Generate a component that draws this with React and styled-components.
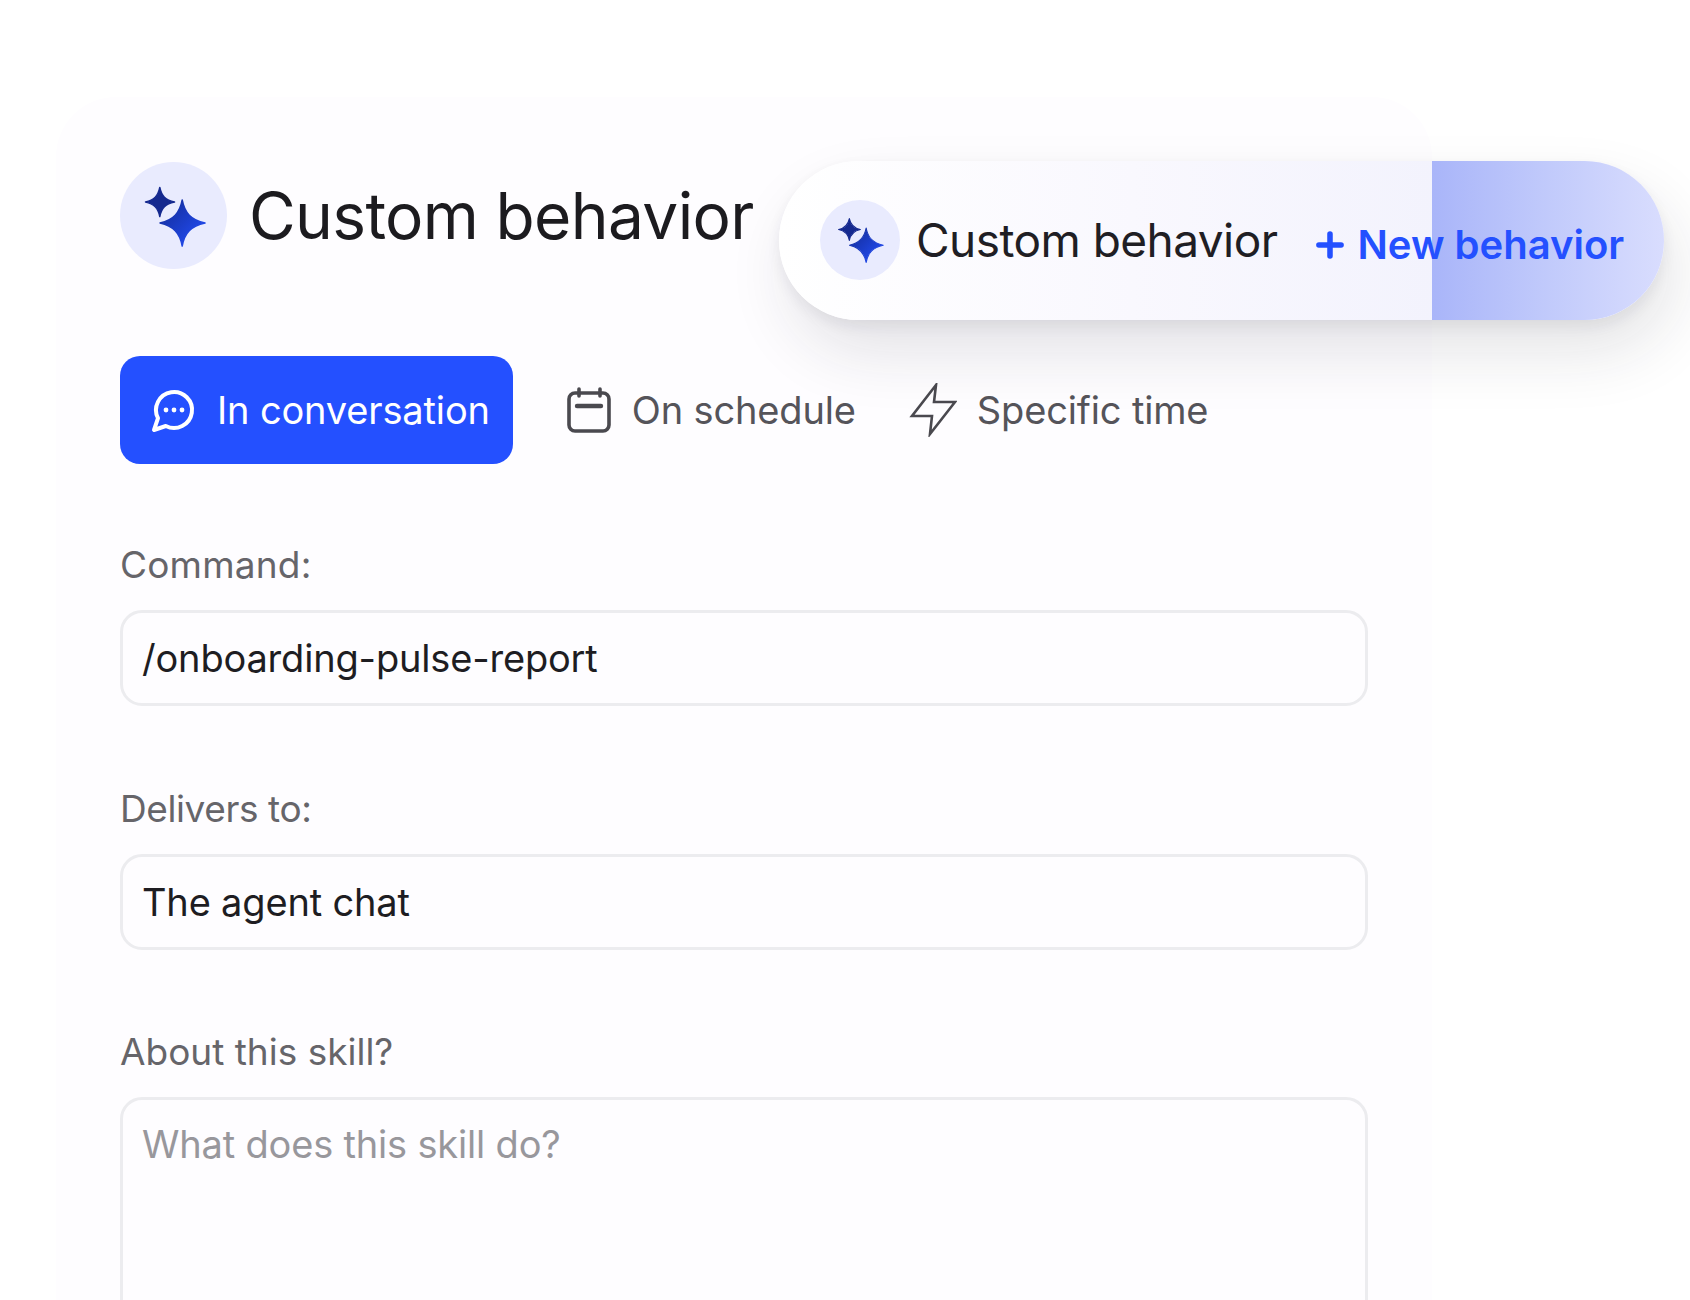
import { createGlobalStyle, styled } from "styled-components";
import { Plus } from "lucide-react";

const GlobalStyle = createGlobalStyle`
  * { box-sizing: border-box; }
  html, body { margin: 0; background: #fff; }
  body { font-family: "Inter", "Liberation Sans", sans-serif; height: 1300px; overflow: hidden; }
`;

const Stage = styled.main`
  position: relative;
  width: 1690px;
  height: 1300px;
  padding: 97px 0 0 56px;
  overflow: hidden;
`;

const Panel = styled.section`
  width: 1376px;
  height: 1300px;
  padding: 65px 0 0 64px;
  background: #fefdff;
  border-radius: 60px 60px 0 0;
`;

const Header = styled.header`
  display: flex;
  align-items: center;
  gap: 22px;
`;

const IconDisc = styled.div`
  flex: none;
  display: flex;
  align-items: center;
  justify-content: center;
  width: ${(p) => p.$size}px;
  height: ${(p) => p.$size}px;
  border-radius: 50%;
  background: #e9ebfe;
`;

const Title = styled.h1`
  margin: 0;
  font-size: 64px;
  font-weight: 400;
  letter-spacing: -0.65px;
  color: #1c1b1f;
`;

const Tabs = styled.nav`
  display: flex;
  align-items: center;
  gap: 53px;
  margin-top: 87px;
`;

const Tab = styled.div`
  display: flex;
  align-items: center;
  gap: ${(p) => (p.$active ? 19 : 20)}px;
  height: 108px;
  padding: ${(p) => (p.$active ? "0 23px 0 30px" : "0")};
  border-radius: 20px;
  background: ${(p) => (p.$active ? "#2450ff" : "transparent")};
  color: ${(p) => (p.$active ? "#fff" : "#55545a")};
  font-size: 38px;
  letter-spacing: -0.15px;
`;

const Form = styled.div`
  display: flex;
  flex-direction: column;
  gap: 80.5px;
  margin-top: 79px;
  width: 1248px;
`;

const Field = styled.div`
  display: flex;
  flex-direction: column;
  gap: 23px;
`;

const Label = styled.div`
  font-size: 37px;
  line-height: 44px;
  letter-spacing: ${(p) => p.$tracking || 0}px;
  color: #66656a;
`;

const Box = styled.div`
  height: ${(p) => (p.$tall ? "400px" : "96px")};
  padding: ${(p) => (p.$tall ? "21px 19px" : "0 19px")};
  display: flex;
  align-items: ${(p) => (p.$tall ? "flex-start" : "center")};
  border: 3px solid #ececef;
  border-radius: 22px;
  background: #fefdff;
  font-size: 38px;
  letter-spacing: -0.18px;
  color: ${(p) => (p.$placeholder ? "#98979c" : "#1e1d22")};
`;

const PillShadow = styled.div`
  position: absolute;
  left: 779px;
  top: 161px;
  width: 885px;
  height: 159px;
  border-radius: 80px;
  box-shadow: 10px 32px 64px rgba(30, 30, 50, 0.12), 0 6px 14px rgba(30, 30, 50, 0.07);
`;

const Pill = styled.aside`
  position: absolute;
  left: 779px;
  top: 161px;
  width: 885px;
  height: 159px;
  display: flex;
  align-items: center;
  padding: 0 0 2px 41px;
  border-radius: 80px;
  overflow: hidden;
  background: linear-gradient(90deg, #ffffff 0%, #f9f8fe 40%, #f2f2fd 80%);
`;

const PillFade = styled.div`
  position: absolute;
  top: 0;
  bottom: 0;
  right: 0;
  width: 232px;
  background: linear-gradient(90deg, #a9b5f9 0%, #c1cafb 50%, #d9ddfe 100%);
`;

const PillTitle = styled.span`
  position: relative;
  margin-left: 16px;
  font-size: 46px;
  letter-spacing: -0.55px;
  color: #1f1e24;
  white-space: nowrap;
`;

const NewBehavior = styled.span`
  position: relative;
  display: flex;
  align-items: center;
  gap: 8px;
  margin: 10px 0 0 34px;
  font-size: 40px;
  font-weight: 600;
  color: #2450ff;
  white-space: nowrap;
`;

function Sparkle({ size, id }) {
  return (
    <svg width={size} height={size} viewBox="0 0 64 64" fill="none">
      <defs>
        <linearGradient id={id} x1="0" y1="0" x2="1" y2="1">
          <stop offset="0" stopColor="#122a92" />
          <stop offset="1" stopColor="#2450ff" />
        </linearGradient>
      </defs>
      <path
        d="M17.8 3.5C19.5 12 23.5 16.2 32.5 18C23.5 19.8 19.5 24 17.8 32.5C16.1 24 12.1 19.8 3.5 18C12.1 16.2 16.1 12 17.8 3.5Z"
        fill="#15298f"
        stroke="#15298f"
        strokeWidth="1.5"
        strokeLinejoin="round"
      />
      <path
        d="M40.2 16C42.6 29 49 36 63 39C49 42 42.6 49 40.2 62C37.8 49 31.4 42 18 39C31.4 36 37.8 29 40.2 16Z"
        fill={`url(#${id})`}
        stroke={`url(#${id})`}
        strokeWidth="1.5"
        strokeLinejoin="round"
      />
    </svg>
  );
}

function ChatIcon() {
  return (
    <svg width="48" height="48" viewBox="0 0 24 24" fill="none" stroke="#fff" strokeWidth="2" strokeLinejoin="round">
      <path d="M7.9 20A9 9 0 1 0 4 16.1L2 22Z" />
      <circle cx="8" cy="12" r="1.2" fill="#fff" stroke="none" />
      <circle cx="12" cy="12" r="1.2" fill="#fff" stroke="none" />
      <circle cx="16" cy="12" r="1.2" fill="#fff" stroke="none" />
    </svg>
  );
}

function CalendarIcon() {
  return (
    <svg width="46" height="46" viewBox="0 0 46 46" fill="none" stroke="#4a494f" strokeWidth="3.6" strokeLinecap="round">
      <rect x="3" y="6" width="40" height="38" rx="6" />
      <path d="M13 2V9M34 2V9" />
      <path d="M11 19H35" strokeWidth="4.4" />
    </svg>
  );
}

function BoltIcon() {
  return (
    <svg width="48" height="54" viewBox="0 0 48 54" fill="none" stroke="#4a494f" strokeWidth="2.6" strokeLinejoin="miter">
      <path d="M27 2L3 33H23L21 51L46 19H25Z" />
    </svg>
  );
}

export default function App() {
  return (
    <>
      <GlobalStyle />
      <Stage>
        <Panel>
          <Header>
            <IconDisc $size={107}>
              <Sparkle size={64} id="sparkle-a" />
            </IconDisc>
            <Title>Custom behavior</Title>
          </Header>
          <Tabs>
            <Tab $active>
              <ChatIcon />
              In conversation
            </Tab>
            <Tab>
              <CalendarIcon />
              On schedule
            </Tab>
            <Tab>
              <BoltIcon />
              Specific time
            </Tab>
          </Tabs>
          <Form>
            <Field>
              <Label $tracking={0.2}>Command:</Label>
              <Box>/onboarding-pulse-report</Box>
            </Field>
            <Field>
              <Label $tracking={-0.4}>Delivers to:</Label>
              <Box>The agent chat</Box>
            </Field>
            <Field>
              <Label>About this skill?</Label>
              <Box $tall $placeholder>What does this skill do?</Box>
            </Field>
          </Form>
        </Panel>
        <PillShadow />
        <Pill>
          <PillFade />
          <IconDisc $size={80}>
            <Sparkle size={48} id="sparkle-b" />
          </IconDisc>
          <PillTitle>Custom behavior</PillTitle>
          <NewBehavior>
            <Plus size={38} strokeWidth={3.5} />
            New behavior
          </NewBehavior>
        </Pill>
      </Stage>
    </>
  );
}
